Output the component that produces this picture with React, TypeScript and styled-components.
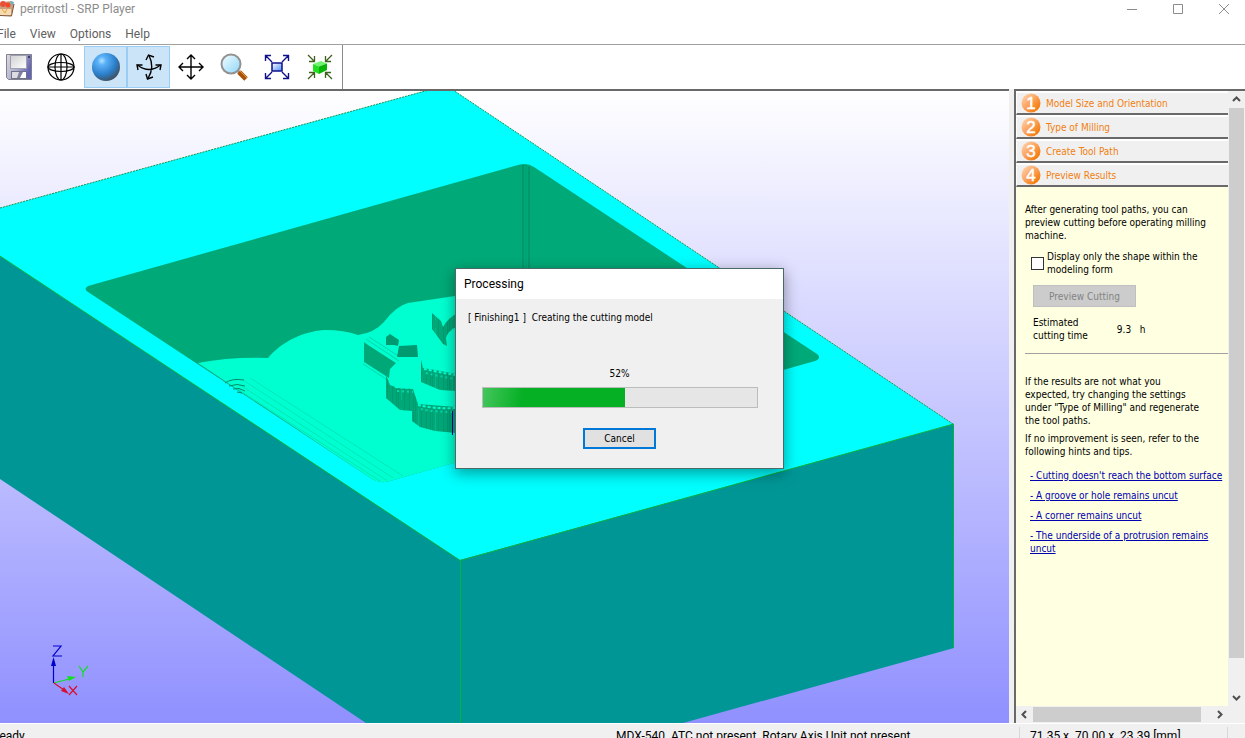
import React from "react";
import styled, { createGlobalStyle, css } from "styled-components";

const Global = createGlobalStyle`
  * { box-sizing: border-box; }
  body { margin: 0; overflow: hidden; background: #fff; }
  button, input { font: inherit; margin: 0; }
`;

const ui = `Roboto, "Open Sans", sans-serif`;
const classic = `"DejaVu Sans Condensed", "Liberation Sans", sans-serif`;

const Window = styled.div`
  display: flex;
  flex-direction: column;
  height: 100vh;
  overflow: hidden;
  background: #fff;
  font: 12px/16px ${ui};
  color: #000;
`;

const TitleBar = styled.header`
  display: flex;
  align-items: flex-start;
  height: 24px;
  flex: none;
  margin-right: -2px;
  color: #8c8c8c;
`;
const AppIcon = styled.svg`
  width: 16px;
  height: 17px;
  margin-right: 5px;
  margin-left: -1px;
`;
const Title = styled.h1`
  flex: 1;
  margin: 0;
  font: 12px/18px ${ui};
`;
const CaptionButton = styled.button`
  width: 46px;
  height: 17px;
  padding: 0;
  border: 0;
  background: none;
  display: flex;
  align-items: center;
  justify-content: center;
`;

const MenuBar = styled.nav`
  display: flex;
  gap: 14px;
  height: 20px;
  flex: none;
  margin-left: -3px;
`;
const MenuItem = styled.button`
  padding: 0;
  border: 0;
  background: none;
  color: #606060;
  line-height: 20px;
`;

const ToolBar = styled.div`
  display: flex;
  align-items: stretch;
  height: 45px;
  flex: none;
  border-top: 1px solid #a0a0a0;
`;
const ToolGroup = styled.div`
  display: flex;
  padding: 1px 1px 1px 0;
  border-right: 1px solid #8c8c8c;
`;
const ToolButton = styled.button<{ $on?: boolean; $w?: number }>`
  width: ${(p) => p.$w || 43}px;
  padding: 0;
  border: 1px solid transparent;
  background: none;
  display: flex;
  align-items: center;
  justify-content: center;
  ${(p) => p.$on && css`
    background: #cce4f7;
    border-color: #99cdf5;
  `}
`;

const Main = styled.main`
  display: flex;
  flex: 1;
  min-height: 0;
  background: #f0f0f0;
`;
const Viewport = styled.section`
  position: relative;
  flex: 1;
  min-width: 0;
  border-top: 2px solid #696969;
  overflow: hidden;
  background: linear-gradient(#ffffff, #9090ff);
`;
const Scene = styled.svg`
  display: block;
  width: 100%;
  height: 100%;
`;

const Side = styled.aside`
  width: 231px;
  flex: none;
  margin-left: 5px;
  border-top: 2px solid #696969;
  border-left: 2px solid #696969;
  display: grid;
  grid-template-columns: 1fr 17px;
  grid-template-rows: 1fr 17px;
  font: 10px/13px ${classic};
`;
const Panel = styled.div`
  min-width: 0;
  overflow: hidden;
  background: #ffffe1;
`;
const StepHeader = styled.button`
  display: flex;
  align-items: center;
  gap: 5px;
  width: 100%;
  height: 24px;
  padding: 0 0 0 4px;
  border: 0;
  border-top: 2px solid #fff;
  border-left: 1px solid #fff;
  border-bottom: 2px solid #696969;
  background: #f0f0f0;
  color: #f08010;
`;
const StepList = styled.div`
  display: grid;
`;
const StepBody = styled.div`
  padding: 16px 0 0 9px;
  white-space: nowrap;
`;
const Para = styled.p<{ $gap: number }>`
  margin: 0 0 ${(p) => p.$gap}px;
`;
const CheckRow = styled.label`
  display: flex;
  align-items: center;
  gap: 3px;
  padding-left: 6px;
`;
const CheckBox = styled.input`
  appearance: none;
  flex: none;
  width: 13px;
  height: 13px;
  border: 1px solid #333;
  background: #fff;
`;
const PreviewButton = styled.button`
  display: block;
  width: 103px;
  height: 22px;
  margin: 9px 0 9px 8px;
  padding: 0;
  border: 1px solid #bfbfbf;
  background: #ccc;
  color: #838383;
`;
const Estimate = styled.div`
  display: flex;
  align-items: center;
  gap: 29px;
  padding: 0 0 11px 8px;
  margin-bottom: 21px;
  border-bottom: 1px solid #a0a0a0;
`;
const Tips = styled.ul`
  list-style: none;
  margin: 0;
  padding: 0 0 0 5px;
  display: grid;
  gap: 7px;
`;
const Tip = styled.a`
  color: #0000b0;
  text-decoration: underline;
`;

const VScroll = styled.div`
  display: flex;
  flex-direction: column;
  align-items: center;
  justify-content: space-between;
  background: #f0f0f0;
`;
const HScroll = styled.div`
  display: flex;
  align-items: center;
  background: #f0f0f0;
`;
const ScrollButton = styled.button`
  width: 17px;
  height: 17px;
  flex: none;
  padding: 0;
  border: 0;
  background: none;
  display: flex;
  align-items: center;
  justify-content: center;
`;
const VThumb = styled.div`
  flex: 0 1 550px;
  width: 15px;
  margin-bottom: auto;
  background: #cdcdcd;
`;
const HThumb = styled.div`
  flex: 1;
  height: 15px;
  margin-right: 10px;
  background: #cdcdcd;
`;

const StatusBar = styled.footer`
  display: flex;
  height: 15px;
  flex: none;
  padding-top: 3px;
  margin-left: -8px;
  overflow: hidden;
  background: #f0f0f0;
  border-top: 1px solid #fff;
  line-height: 18px;
  white-space: pre;
`;
const StatusCell = styled.div<{ $w?: number; $pad?: number }>`
  flex: ${(p) => (p.$w ? `0 0 ${p.$w}px` : 1)};
  padding: 0 ${(p) => p.$pad || 0}px;
`;
const Divided = styled(StatusCell)`
  border-left: 1px solid #d7d7d7;
`;

const Dialog = styled.section`
  position: absolute;
  left: 455px;
  top: 177px;
  width: 329px;
  border: 1px solid #4a6a6a;
  background: #f0f0f0;
  box-shadow: 0 4px 14px rgba(0, 0, 0, 0.4);
  font: 10px/13px ${classic};
`;
const DialogTitle = styled.h2`
  margin: 0;
  padding: 0 8px;
  height: 30px;
  background: #fff;
  font: 12px/30px ${ui};
`;
const DialogBody = styled.div`
  display: flex;
  flex-direction: column;
  align-items: center;
  padding: 12px 12px 19px;
`;
const Message = styled.p`
  margin: 0 0 43px;
  align-self: flex-start;
  white-space: pre;
`;
const Track = styled.div`
  width: 276px;
  height: 21px;
  margin: 7px 0 20px 1px;
  border: 1px solid #bcbcbc;
  background: #e6e6e6;
`;
const Fill = styled.div`
  height: 100%;
  background: linear-gradient(100deg, #44c65c, #06b025 28%);
`;
const CancelButton = styled.button`
  width: 73px;
  height: 21px;
  padding: 0;
  border: 2px solid #0078d7;
  background: #e1e1e1;
`;

const steps = ["Model Size and Orientation", "Type of Milling", "Create Tool Path", "Preview Results"];

const StepBadge = ({ n }: { n: number }) => (
  <svg width="20" height="20" viewBox="0 0 20 20" aria-hidden="true">
    <defs>
      <linearGradient id={`badge${n}`} x1="0" y1="0" x2="1" y2="1">
        <stop offset="0.1" stopColor="#ffd0a8" />
        <stop offset="0.5" stopColor="#fba058" />
        <stop offset="0.9" stopColor="#f27400" />
      </linearGradient>
    </defs>
    <circle cx="10" cy="10" r="9.5" fill={`url(#badge${n})`} />
    <text x="10" y="16" textAnchor="middle" fontFamily="Liberation Sans" fontSize="17" fill="#fff" stroke="#fff" strokeWidth="0.5">{n}</text>
  </svg>
);

const Chevron = ({ turn }: { turn: number }) => (
  <svg width="9" height="9" viewBox="0 0 9 9" aria-hidden="true">
    <path d="M1 6 L4.500 2.500 L8 6" fill="none" stroke="#505050" strokeWidth="2" transform={`rotate(${turn} 4.500 4.500)`} />
  </svg>
);

const SaveIcon = () => (
  <svg width="26" height="26" viewBox="0 0 26 26">
    <defs>
      <linearGradient id="disk" x1="0" x2="1" y1="0" y2="0.4"><stop offset="0" stopColor="#dcdce2" /><stop offset="0.6" stopColor="#a8a8cc" /><stop offset="1" stopColor="#6464b4" /></linearGradient>
      <linearGradient id="label" x1="0" y1="0" x2="1" y2="1"><stop offset="0" stopColor="#d0d0d2" /><stop offset="1" stopColor="#fff" /></linearGradient>
    </defs>
    <path d="M.5 .5H25.500V25.500H2.500L.5 23.500Z" fill="url(#disk)" stroke="#80808e" />
    <rect x="4.500" y="1.500" width="16" height="13" fill="url(#label)" stroke="#a0a0ac" />
    <rect x="5.500" y="17.500" width="15" height="7" fill="#8080a0" stroke="#707088" />
    <path d="M6 18H13L11 24H6Z" fill="#dcdce0" /><path d="M14 24L17 18H20V24Z" fill="#fff" />
    <rect x="22" y="2" width="2" height="2" fill="#40405c" />
  </svg>
);
const GlobeIcon = () => (
  <svg width="28" height="28" viewBox="0 0 28 28" fill="none" stroke="#000" strokeWidth="1.200">
    <circle cx="14" cy="14" r="13" /><ellipse cx="14" cy="14" rx="6" ry="13" /><ellipse cx="14" cy="14" rx="13" ry="4.500" /><path d="M14 1V27M1 14H27" />
  </svg>
);
const SphereIcon = () => (
  <svg width="28" height="28" viewBox="0 0 28 28">
    <defs><radialGradient id="ball" cx="35%" cy="28%" r="75%"><stop offset="0" stopColor="#b4e4ff" /><stop offset="0.200" stopColor="#5cb2f8" /><stop offset="0.650" stopColor="#2b80cc" /><stop offset="1" stopColor="#405060" /></radialGradient></defs>
    <circle cx="14" cy="14" r="14" fill="url(#ball)" />
  </svg>
);
const RotateIcon = () => (
  <svg width="26" height="26" viewBox="0 0 26 26" fill="none" stroke="#000" strokeWidth="1.400">
    <path d="M1.500 11Q13 20 24.500 11M13 1.500Q19 13 12 24.500" />
    <path d="M2 16L1 11L6.500 11M19.500 11L25 11L24 16M18 3L12.500 1L10 6M10 20L11.500 25L17 23" />
  </svg>
);
const PanIcon = () => (
  <svg width="26" height="26" viewBox="0 0 26 26" fill="none" stroke="#000" strokeWidth="1.400">
    <path d="M13 1V25M1 13H25M9 5L13 1L17 5M9 21L13 25L17 21M5 9L1 13L5 17M21 9L25 13L21 17" />
  </svg>
);
const ZoomIcon = () => (
  <svg width="28" height="28" viewBox="0 0 28 28">
    <defs><linearGradient id="lens" x1="0" y1="0" x2="1" y2="1"><stop offset="0" stopColor="#f4fdff" /><stop offset="1" stopColor="#8cd6fa" /></linearGradient></defs>
    <path d="M17 17L20 20" stroke="#999" strokeWidth="3" /><path d="M19 19L26 26" stroke="#a85208" strokeWidth="5" /><path d="M20 18L27 25" stroke="#e09438" />
    <circle cx="11" cy="11" r="9.500" fill="url(#lens)" stroke="#929292" strokeWidth="2" />
  </svg>
);
const FitIcon = () => (
  <svg width="26" height="26" viewBox="0 0 26 26" fill="none">
    <defs><linearGradient id="fit" x1="0" y1="0" x2="1" y2="1"><stop offset="0" stopColor="#fff" /><stop offset="1" stopColor="#4c8cf8" /></linearGradient></defs>
    <path d="M1.500 7V1.500H7M1.500 1.500L8 8M19 1.500H24.500V7M24.500 1.500L18 8M1.500 19V24.500H7M1.500 24.500L8 18M19 24.500H24.500V19M24.500 24.500L18 18" stroke="#10108c" strokeWidth="1.400" />
    <rect x="8" y="9" width="10" height="8" fill="url(#fit)" stroke="#10108c" strokeWidth="1.500" />
  </svg>
);
const CubeIcon = () => (
  <svg width="26" height="26" viewBox="0 0 26 26" fill="none">
    <path d="M1 1L7 7M7.500 2V7.500H2M25 1L19 7M18.500 2V7.500H24M1 25L7 19M2 18.500H7.500V24M25 25L19 19M18.500 24V18.500H24" stroke="#406020" strokeWidth="1.300" />
    <path d="M6 10L14 7L20 9.500L12 12.500Z" fill="#70f470" /><path d="M6 10L12 12.500V20L6 17Z" fill="#20e020" /><path d="M12 12.500L20 9.500V16L12 20Z" fill="#08b408" />
  </svg>
);

const Model = () => (
  <Scene viewBox="0 91 1009 632" preserveAspectRatio="xMinYMin slice" role="img" aria-label="Cutting model">
    <defs>
      <pattern id="cuts" width="17" height="40" patternUnits="userSpaceOnUse"><rect width="17" height="40" fill="#00a878" /><path d="M1.500 0V40M5.500 0V40M7.500 0V40M13.500 0V40" stroke="#009c70" /><path d="M10.500 8V40" stroke="#00b888" /></pattern>
    </defs>
    <path d="M0 208L436 88H450L953 424L460 560L0 256Z" fill="#00ffff" />
    <path d="M0 256L460 560V723H366L0 479Z" fill="#009696" />
    <path d="M460 560L954 424V648L683 723H460Z" fill="#009696" />
    <path d="M0 208L436 88M450 88L953 424" fill="none" stroke="#209050" strokeDasharray="2 1" />
    <path d="M0 256L460 560.500L953.500 424V648M460.500 560V723" fill="none" stroke="#00b840" />
    <path d="M88 286L518 165Q527 162 534 167L817 354Q822 358 815 361L390 481Q380 484 372 479L88 292Q83 289 88 286Z" fill="#00aa78" />
    <path d="M523 165V268M529 167V268" stroke="#00986a" strokeWidth="2" fill="none" />
    <path d="M526 165V268" stroke="#00a070" fill="none" />
    <path d="M198 363Q230 357 268 358C282 341 305 331 325 330Q344 330 358 335Q374 333 384 322Q396 306 408 303L455 296H600V422L390 481Q380 484 372 479Z" fill="#00ffd0" />
    <path d="M243 380L393 478M240 385L386 480M236 388L380 481M250 378L403 476" stroke="#00e8b8" fill="none" />
    <path d="M225 383Q232 378 244 380M229 386Q237 383 245 386M233 389Q239 387 245 391M237 392L242 393" stroke="#008c64" fill="none" />
    <path d="M364 342L368 345L396 363L390 369L389 378L364 362Z" fill="#00a878" />
    <path d="M363 364L389 381M366 339L399 361M369 337L400 357" stroke="#00d8a8" />
    <path d="M386 337L390 334L399 340L398 346L394 345L386 345ZM399 346L417 345L418 357H397Z" fill="#009a70" />
    <path d="M386 375L390 385L398 388L413 389L418 404L430 405L456 407V433L435 431L420 427L412 421V411L400 410L386 398Z" fill="url(#cuts)" />
    <path d="M421 360L423 368L435 370L456 374V391L440 390L421 382Z" fill="url(#cuts)" />
    <path d="M432 313L441 321L443 327Q448 318 456 314V327Q448 331 446 338L447 346L443 344L432 329Z" fill="url(#cuts)" />
    <path d="M395 387L413 388M418 405Q434 409 455 408M424 369Q438 372 455 375" stroke="#00ffd0" strokeDasharray="3 2" strokeWidth="2" fill="none" />
    <path d="M397 391L413 392M421 409Q434 412 455 412M426 373Q438 376 455 379" stroke="#00d8ac" strokeDasharray="2 3" strokeWidth="2" fill="none" />
    <path d="M452.500 411V435" stroke="#0000b0" />
    <g fill="none" strokeWidth="1.200">
      <path d="M53.500 683V664M53 646H61L53 656H62" stroke="#0000d0" /><path d="M53.500 657L56 666H51Z" fill="#0000d0" />
      <path d="M54 683L69 679M79 666L83 672L88 666M83 672V677" stroke="#10e020" /><path d="M76 677L67 676L69 681Z" fill="#10e020" />
      <path d="M54 683L64 690M69 686L77 695M77 686L69 695" stroke="#d81030" /><path d="M69 694L61 691L64 687Z" fill="#d81030" />
    </g>
  </Scene>
);

const tools = [
  { name: "Save", icon: <SaveIcon />, w: 38 },
  { name: "Wireframe", icon: <GlobeIcon />, w: 46 },
  { name: "Shaded", icon: <SphereIcon />, on: true },
  { name: "Rotate", icon: <RotateIcon />, on: true },
  { name: "Move", icon: <PanIcon />, w: 42 },
  { name: "Zoom", icon: <ZoomIcon /> },
  { name: "Fit", icon: <FitIcon /> },
  { name: "Center", icon: <CubeIcon /> },
];

export default function App() {
  const progress = 52;
  return (
    <Window>
      <Global />
      <TitleBar>
        <AppIcon viewBox="0 0 16 17" aria-hidden="true">
          <path d="M0 5L3 2L13 1L15 4L12 16L0 15Z" fill="#c8a080" /><path d="M1 9H12V15H1Z" fill="#f4dcb0" /><circle cx="4" cy="4" r="3" fill="#e85038" /><circle cx="9" cy="5" r="2.500" fill="#f04828" /><path d="M11 1L15 2L13 6Z" fill="#60b8d0" /><path d="M3 9L6 13L8 9" stroke="#f0a040" fill="none" /><path d="M15 4L12.500 16L1 15.500" stroke="#805030" fill="none" />
        </AppIcon>
        <Title>perritostl - SRP Player</Title>
        <CaptionButton aria-label="Minimize"><svg width="10" height="10"><path d="M0 5.500H10" stroke="#8c8c8c" /></svg></CaptionButton>
        <CaptionButton aria-label="Maximize"><svg width="10" height="10"><path d="M.500 .500H9.500V9.500H.500Z" fill="none" stroke="#8c8c8c" /></svg></CaptionButton>
        <CaptionButton aria-label="Close"><svg width="10" height="10"><path d="M0 0L10 10M10 0L0 10" stroke="#8c8c8c" /></svg></CaptionButton>
      </TitleBar>
      <MenuBar>
        {["File", "View", "Options", "Help"].map((m) => <MenuItem key={m}>{m}</MenuItem>)}
      </MenuBar>
      <ToolBar role="toolbar">
        <ToolGroup>
          {tools.map((t) => <ToolButton key={t.name} aria-label={t.name} $on={t.on} $w={t.w}>{t.icon}</ToolButton>)}
        </ToolGroup>
      </ToolBar>
      <Main>
        <Viewport>
          <Model />
          <Dialog role="dialog" aria-labelledby="dialog-title">
            <DialogTitle id="dialog-title">Processing</DialogTitle>
            <DialogBody>
              <Message>{"[ Finishing1 ]  Creating the cutting model"}</Message>
              <span>{progress}%</span>
              <Track role="progressbar" aria-valuenow={progress} aria-label="Progress"><Fill style={{ width: `${progress}%` }} /></Track>
              <CancelButton>Cancel</CancelButton>
            </DialogBody>
          </Dialog>
        </Viewport>
        <Side>
          <Panel>
            <StepList>
              {steps.map((s, i) => <StepHeader key={s}><StepBadge n={i + 1} />{s}</StepHeader>)}
            </StepList>
            <StepBody>
              <Para $gap={8}>After generating tool paths, you can<br />preview cutting before operating milling<br />machine.</Para>
              <CheckRow><CheckBox type="checkbox" /><span>Display only the shape within the<br />modeling form</span></CheckRow>
              <PreviewButton disabled>Preview Cutting</PreviewButton>
              <Estimate><span>Estimated<br />cutting time</span><span>9.3 &nbsp; h</span></Estimate>
              <Para $gap={5}>If the results are not what you<br />expected, try changing the settings<br />under "Type of Milling" and regenerate<br />the tool paths.</Para>
              <Para $gap={11}>If no improvement is seen, refer to the<br />following hints and tips.</Para>
              <Tips>
                <li><Tip href="#surface">- Cutting doesn't reach the bottom surface</Tip></li>
                <li><Tip href="#groove">- A groove or hole remains uncut</Tip></li>
                <li><Tip href="#corner">- A corner remains uncut</Tip></li>
                <li><Tip href="#underside">- The underside of a protrusion remains<br />uncut</Tip></li>
              </Tips>
            </StepBody>
          </Panel>
          <VScroll>
            <ScrollButton aria-label="Scroll up"><Chevron turn={0} /></ScrollButton>
            <VThumb />
            <ScrollButton aria-label="Scroll down"><Chevron turn={180} /></ScrollButton>
          </VScroll>
          <HScroll>
            <ScrollButton aria-label="Scroll left"><Chevron turn={270} /></ScrollButton>
            <HThumb />
            <ScrollButton aria-label="Scroll right"><Chevron turn={90} /></ScrollButton>
          </HScroll>
        </Side>
      </Main>
      <StatusBar>
        <StatusCell>Ready</StatusCell>
        <StatusCell $w={403}>MDX-540  ATC not present  Rotary Axis Unit not present</StatusCell>
        <Divided $w={208} $pad={10}>71.35 x  70.00 x  23.39 [mm]</Divided>
        <Divided $w={18} />
      </StatusBar>
    </Window>
  );
}
